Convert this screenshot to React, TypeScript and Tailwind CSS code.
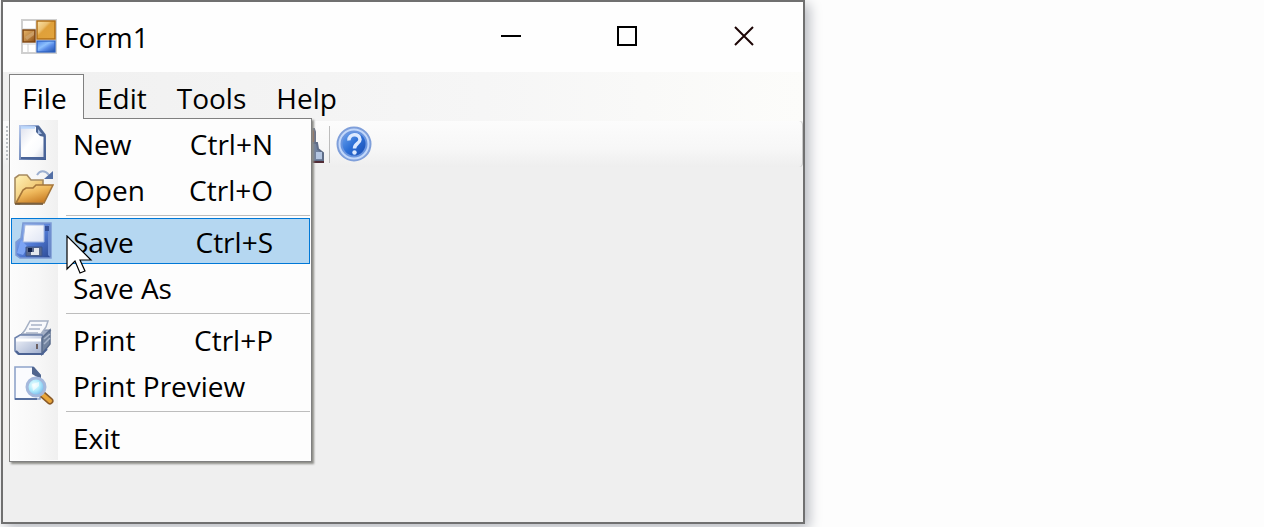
import React from 'react';

function FormIcon() {
  return (
    <svg width="36" height="35" viewBox="0 0 36 35" aria-hidden="true">
      <defs>
        <linearGradient id="fa" x1="0" y1="0" x2="1" y2="1">
          <stop offset="0" stopColor="#fbe3a8" />
          <stop offset=".35" stopColor="#ecc070" />
          <stop offset=".45" stopColor="#dfa03a" />
          <stop offset="1" stopColor="#e2a43c" />
        </linearGradient>
        <linearGradient id="fb" x1="0" y1="0" x2="1" y2="1">
          <stop offset="0" stopColor="#e9b566" />
          <stop offset=".5" stopColor="#c08a48" />
          <stop offset="1" stopColor="#8a4a10" />
        </linearGradient>
        <linearGradient id="fc" x1="0" y1="0" x2="1" y2="1">
          <stop offset="0" stopColor="#4f86ea" />
          <stop offset=".4" stopColor="#8dc0fd" />
          <stop offset=".6" stopColor="#5a8ce8" />
          <stop offset="1" stopColor="#2050a8" />
        </linearGradient>
      </defs>
      <rect x="1" y="1" width="34" height="33" fill="#fff" stroke="#cfcfcf" strokeWidth="2" />
      <path d="M15 1v33M1 10h14M1 25h14M7 25v9M15 21h20" stroke="#cfcfcf" strokeWidth="1" />
      <rect x="16" y="2" width="18" height="18" fill="url(#fa)" stroke="#ad6a12" strokeWidth="1.4" />
      <rect x="2" y="11" width="12" height="12" fill="url(#fb)" stroke="#7c4410" strokeWidth="1.4" />
      <path d="M4 18l9-6v4l-7 5z" fill="#d1a874" opacity=".7" />
      <rect x="16" y="22" width="18" height="11" fill="url(#fc)" stroke="#2b5fc0" strokeWidth="1.2" />
    </svg>
  );
}

function NewIcon() {
  return (
    <svg width="42" height="42" viewBox="0 0 42 42" aria-hidden="true">
      <defs>
        <linearGradient id="na" x1="0" y1="0" x2="1" y2="1">
          <stop offset="0" stopColor="#dcdfec" />
          <stop offset=".45" stopColor="#fff" />
          <stop offset=".7" stopColor="#fafbfd" />
          <stop offset="1" stopColor="#cfd4e2" />
        </linearGradient>
        <linearGradient id="nb" x1="0" y1="0" x2="1" y2="1">
          <stop offset="0" stopColor="#b4c6ea" />
          <stop offset="1" stopColor="#3f5c94" />
        </linearGradient>
      </defs>
      <path d="M8 4h18l7 9v24H8z" fill="url(#na)" stroke="url(#nb)" strokeWidth="2" />
      <path d="M9 5.500h14" stroke="#bcd8fd" strokeWidth="2.500" />
      <path d="M24 4h3l6 8v3l-5-1-4-4z" fill="#4d6694" />
      <path d="M26 7l4 5h-4z" fill="#a3b9e0" />
      <path d="M32.500 14v22H9" fill="none" stroke="#4a6498" strokeWidth="2" />
    </svg>
  );
}

function OpenIcon() {
  return (
    <svg width="42" height="42" viewBox="0 0 42 42" aria-hidden="true">
      <defs>
        <linearGradient id="oa" x1="0" y1="0" x2="1" y2="1">
          <stop offset="0" stopColor="#fff3b8" />
          <stop offset=".5" stopColor="#f3cf80" />
          <stop offset="1" stopColor="#d79b3e" />
        </linearGradient>
        <linearGradient id="ob" x1="0" y1="0" x2=".6" y2="1">
          <stop offset="0" stopColor="#ffe098" />
          <stop offset=".5" stopColor="#eeb75a" />
          <stop offset="1" stopColor="#c97e26" />
        </linearGradient>
      </defs>
      <path d="M3 35V10l4-3h8l4 5h12v8L7 36z" fill="url(#oa)" stroke="#a68a60" strokeWidth="1.6" />
      <path d="M4 35l7-13 3-2h7l3-3h17l-9 18z" fill="url(#ob)" stroke="#a5763a" strokeWidth="1.6" />
      <path d="M3 36h28" stroke="#6c5334" strokeWidth="1.6" />
      <path d="M25 7c3-5 8-5 12 0" fill="none" stroke="#9db0d0" strokeWidth="2" />
      <path d="M41 3v8h-9z" fill="#536fa5" />
    </svg>
  );
}

function SaveIcon() {
  return (
    <svg width="42" height="42" viewBox="0 0 42 42" aria-hidden="true">
      <defs>
        <linearGradient id="sa" x1="0" y1="0" x2="1" y2="1">
          <stop offset="0" stopColor="#9dbdf8" />
          <stop offset=".55" stopColor="#4f78d2" />
          <stop offset="1" stopColor="#2b4890" />
        </linearGradient>
        <linearGradient id="sb" x1="0" y1="0" x2="1" y2="1">
          <stop offset="0" stopColor="#fff" />
          <stop offset="1" stopColor="#dfe5f4" />
        </linearGradient>
      </defs>
      <path d="M11 3h28v35H8l-4-3V22l5-4z" fill="url(#sa)" stroke="#7d9bd4" strokeWidth="1.5" />
      <path d="M36 5v30l2 2V5z" fill="#6b8cd2" />
      <path d="M9 20L5 33l6 2 5-8z" fill="#7ca4f4" />
      <path d="M33 6h4v5h-4z" fill="#334f96" />
      <path d="M13 5h19v17H11z" fill="url(#sb)" stroke="#a5b9e0" />
      <path d="M14 27h16v9H14z" fill="#5b6a8c" stroke="#3b558c" />
      <rect x="16" y="28" width="4" height="4" fill="#101f48" />
      <path d="M22 28h5v7h-8v-3h3z" fill="#e4e7ed" />
    </svg>
  );
}

function PrintIcon() {
  return (
    <svg width="42" height="42" viewBox="0 0 42 42" aria-hidden="true">
      <defs>
        <linearGradient id="pa" x1="0" y1="0" x2="1" y2="1">
          <stop offset="0" stopColor="#f6f8fd" />
          <stop offset="1" stopColor="#9daccc" />
        </linearGradient>
      </defs>
      <path d="M9 16l5-4h25l-6 8H5z" fill="#a3afc6" stroke="#7484a5" />
      <path d="M10 16l3-4 5-9h18l-2 6-5 7z" fill="#f8f9fc" stroke="#a5b0c4" strokeWidth="1.5" />
      <path d="M19 7h11M17 11h11M14 15h12" stroke="#a8b2c6" strokeWidth="1.5" />
      <path d="M3 20l5-3h22l1 3v16H6l-3-3z" fill="url(#pa)" stroke="#6d82ac" strokeWidth="1.5" />
      <path d="M30 20l8-8v14l-8 10z" fill="#73849f" stroke="#5a6c8c" strokeWidth="1.5" />
      <path d="M32 21l6-5M32 26l6-6" stroke="#a8b5ca" strokeWidth="1.5" />
      <path d="M4 22h25" stroke="#fff" strokeWidth="3" />
      <path d="M4 33l3 3h23l5-5" fill="none" stroke="#4c6393" strokeWidth="2" />
      <path d="M25 26v5" stroke="#6c6062" strokeWidth="2" />
    </svg>
  );
}

function PreviewIcon() {
  return (
    <svg width="42" height="42" viewBox="0 0 42 42" aria-hidden="true">
      <defs>
        <radialGradient id="va" cx=".4" cy=".4" r=".65">
          <stop offset="0" stopColor="#f4ffff" />
          <stop offset=".5" stopColor="#aeeafc" />
          <stop offset="1" stopColor="#6daee8" />
        </radialGradient>
      </defs>
      <path d="M3 3h18l7 8v24H3z" fill="#fafbfe" stroke="#8fa4ca" strokeWidth="1.6" />
      <path d="M20 3h2l7 8v3l-4-1-5-3z" fill="#50658e" />
      <path d="M3 35h22" stroke="#4d6798" strokeWidth="1.8" />
      <path d="M30 30l8 7" stroke="#8a5a28" strokeWidth="7" strokeLinecap="round" />
      <path d="M30 30l8 7" stroke="#e9a63a" strokeWidth="4" strokeLinecap="round" />
      <circle cx="24" cy="23" r="9" fill="url(#va)" stroke="#a4b8dc" strokeWidth="3" />
      <path d="M20 20l7-2v4l-6 5z" fill="#fff" opacity=".6" />
    </svg>
  );
}

function HelpIcon() {
  return (
    <svg width="36" height="36" viewBox="0 0 36 36" aria-hidden="true">
      <defs>
        <linearGradient id="ha" x1="0" y1="0" x2="1" y2="1">
          <stop offset="0" stopColor="#74a8ef" />
          <stop offset=".5" stopColor="#2c6fd6" />
          <stop offset="1" stopColor="#1749ae" />
        </linearGradient>
      </defs>
      <circle cx="18" cy="18" r="16.500" fill="#c3d8fa" stroke="#7f9fda" strokeWidth="2" />
      <circle cx="18" cy="18" r="12.500" fill="url(#ha)" stroke="#6a95df" strokeWidth="2" />
      <path d="M13 14.500c-1-7 11-8 11-1 0 4-5.500 4-5.500 9" fill="none" stroke="#dce9ff" strokeWidth="3.500" />
      <circle cx="18.500" cy="26.500" r="2.200" fill="#dce9ff" />
    </svg>
  );
}

function PasteIcon() {
  return (
    <svg width="36" height="40" viewBox="0 0 36 40" aria-hidden="true">
      <path d="M20 5h5l1 3v11h-6z" fill="#a3552f" stroke="#6d7488" strokeWidth="2" />
      <path d="M20 19h8l1 6 5 4v8H20z" fill="#71829f" stroke="#5f6d88" strokeWidth="2" />
      <rect x="27" y="28" width="6" height="7" fill="#b4c6e2" />
      <path d="M18 38h17" stroke="#512c36" strokeWidth="2" />
    </svg>
  );
}

function Pointer() {
  return (
    <svg className="pointer-events-none absolute left-[54px] top-4 z-10" width="27" height="40" viewBox="0 0 27 40" aria-hidden="true">
      <path d="M1 1v33l8-8 5 12 5-2-5-11h11z" fill="#fff" stroke="#000" strokeWidth="1.200" />
    </svg>
  );
}

type Item = { label: string; keys?: string; icon?: React.ReactNode; active?: boolean };

const groups: Item[][] = [
  [
    { label: 'New', keys: 'Ctrl+N', icon: <NewIcon /> },
    { label: 'Open', keys: 'Ctrl+O', icon: <OpenIcon /> },
  ],
  [
    { label: 'Save', keys: 'Ctrl+S', icon: <SaveIcon />, active: true },
    { label: 'Save As' },
  ],
  [
    { label: 'Print', keys: 'Ctrl+P', icon: <PrintIcon /> },
    { label: 'Print Preview', icon: <PreviewIcon /> },
  ],
  [{ label: 'Exit' }],
];

function MenuRow({ item }: { item: Item }) {
  return (
    <button
      type="button"
      role="menuitem"
      className={
        'relative flex h-[46px] w-full items-center border pr-9 text-left ' +
        (item.active ? 'border-[#0078d7] bg-[#b5d7f1]' : 'border-transparent')
      }
    >
      <span className="flex w-[61px] shrink-0">{item.icon}</span>
      <span className="whitespace-nowrap pt-0.5">{item.label}</span>
      {item.keys && <span className="ml-auto whitespace-nowrap pt-0.5">{item.keys}</span>}
      {item.active && <Pointer />}
    </button>
  );
}

function FileMenu() {
  return (
    <div
      role="menu"
      aria-label="File"
      className="absolute left-0 top-11 z-10 w-[303px] border border-[#808080] bg-[#fdfdfd] p-px shadow-[2px_2px_2px_#8d8d88]"
    >
      <div className="bg-[linear-gradient(90deg,#fcfcfc,#f7f7f7_60%,#f0f0f0)] bg-[length:47px_100%] bg-no-repeat">
        {groups.map((group, i) => (
          <React.Fragment key={i}>
            {i > 0 && (
              <div role="separator" className="flex h-1.5 items-center pl-[55px]">
                <div className="h-px w-full bg-[#bdbdbd]" />
              </div>
            )}
            {group.map((item) => (
              <MenuRow key={item.label} item={item} />
            ))}
          </React.Fragment>
        ))}
      </div>
    </div>
  );
}

export default function App() {
  return (
    <div className="flex h-screen overflow-hidden bg-[#fdfdfd] pb-[3px] pl-px font-['Open_Sans','Noto_Sans',sans-serif] text-[28px] leading-9 text-black">
      <main className="flex w-full max-w-[804px] flex-col border-2 border-[#707070] bg-[#efefef] shadow-[4px_4px_12px_#b4b7be]">
        <header className="flex h-[70px] shrink-0 items-center bg-[#fefefe] pb-0.5 pl-[18px]">
          <FormIcon />
          <h1 className="ml-[7px] grow pt-0.5">Form1</h1>
          <div className="flex h-full">
            <button type="button" aria-label="Minimize" className="flex w-[116px] items-center justify-center">
              <svg width="20" height="20" aria-hidden="true">
                <path d="M0 10h20" stroke="#000" strokeWidth="2" />
              </svg>
            </button>
            <button type="button" aria-label="Maximize" className="flex w-[116px] items-center justify-center">
              <svg width="20" height="20" aria-hidden="true">
                <rect x="1" y="1" width="18" height="18" fill="none" stroke="#000" strokeWidth="2" />
              </svg>
            </button>
            <button type="button" aria-label="Close" className="flex w-[118px] items-center justify-center">
              <svg width="20" height="20" aria-hidden="true">
                <path d="M1 1l18 18M19 1L1 19" stroke="#1c0505" strokeWidth="2" />
              </svg>
            </button>
          </div>
        </header>

        <nav className="flex h-[49px] shrink-0 bg-[linear-gradient(90deg,#f0f0f0,#f6f6f6_60%,#fcfcfa)] pl-1.5 pt-0.5">
          <div className="relative flex">
            <button type="button" aria-expanded="true" className="relative z-20 h-[45px] w-[75px] border border-b-0 border-[#808080] bg-[#fdfdfd] pr-1 pt-0.5">
              File
            </button>
            <FileMenu />
          </div>
          <button type="button" className="h-[45px] pl-[13px] pr-[15px] pt-0.5">Edit</button>
          <button type="button" className="h-[45px] px-[15px] pt-0.5">Tools</button>
          <button type="button" className="h-[45px] px-[15px] pt-0.5">Help</button>
        </nav>

        <div
          role="toolbar"
          className="flex h-[46px] shrink-0 items-center rounded-r-sm border-r border-[#c8c8c8] bg-[linear-gradient(#fcfcfc,#f7f7f7_60%,#eeeeee)] pl-[3px]"
        >
          <div className="h-9 w-[2px] bg-[repeating-linear-gradient(#bcc0c4_0_2px,transparent_2px_4px)]" />
          <button type="button" aria-label="Paste" className="ml-[281px] flex">
            <PasteIcon />
          </button>
          <div className="ml-[4px] h-[37px] w-px bg-[#bdbdbd]" />
          <button type="button" aria-label="Help contents" className="ml-1.5 flex">
            <HelpIcon />
          </button>
        </div>
      </main>
    </div>
  );
}
